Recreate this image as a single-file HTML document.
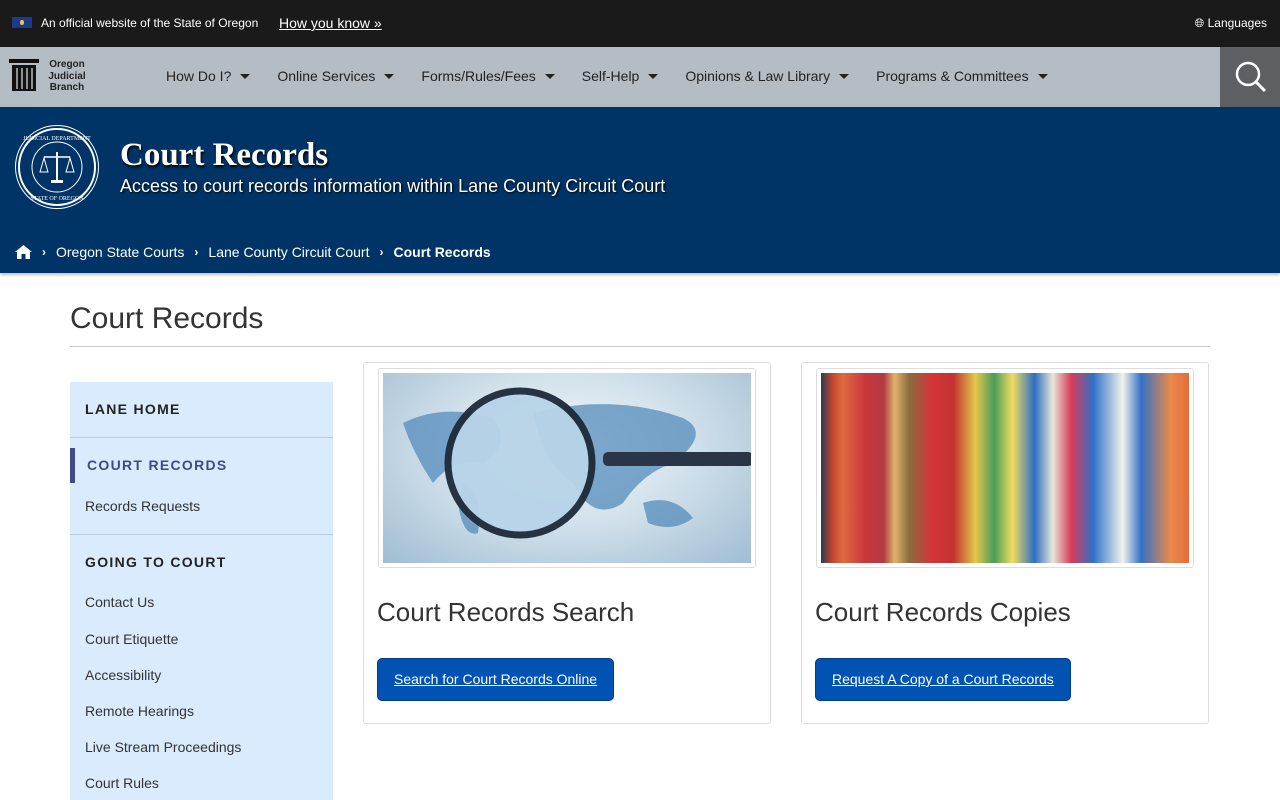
<!DOCTYPE html>
<html><head><meta charset="utf-8"><style>
*{box-sizing:border-box;margin:0;padding:0}
html,body{width:1280px;height:800px;overflow:hidden}
body{font-family:"Liberation Sans",Arial,sans-serif;background:#fff;color:#333;position:relative}
.top{height:47px;background:#1a1a1a;color:#fff;font-size:12px;position:relative}
.top .flag{position:absolute;left:12px;top:17px;width:20px;height:11px;background:#1d3a8a}
.top .flag:after{content:"";position:absolute;left:8px;top:3px;width:4px;height:5px;background:#e6c24a;border-radius:2px}
.top .t1{position:absolute;left:41px;top:16px}
.top .t2{position:absolute;left:279px;top:15px;font-size:14px;text-decoration:underline}
.top .lang{position:absolute;right:13px;top:16px}
.nav{height:60px;background:#b3bdc3;position:relative}
.logo{position:absolute;left:9px;top:12px}
.logo .txt{position:absolute;left:36px;top:0;font-size:10px;font-weight:bold;line-height:11.5px;text-align:center;color:#222;width:44px}
.nav ul{list-style:none;position:absolute;left:166px;top:21px;display:flex;font-size:14px;color:#222}
.nav li{margin-right:27px;white-space:nowrap}
.nav li:after{content:"";display:inline-block;margin-left:9px;border-left:5px solid transparent;border-right:5px solid transparent;border-top:5px solid #222;vertical-align:2px}
.srch{position:absolute;right:0;top:0;width:60px;height:60px;background:#5d6063}
.hero{height:166px;background:#003366;position:relative;color:#fff;box-shadow:0 2px 3px rgba(0,0,0,.25)}
.seal{position:absolute;left:18px;top:21px;width:78px;height:78px;border-radius:50%;border:2px solid #fff;box-shadow:0 0 0 2px #003366,0 0 0 3px #fff}
.hero h1{position:absolute;left:120px;top:30px;font-family:"Liberation Serif",serif;font-size:33px;font-weight:bold;text-shadow:1px 2px 2px #000}
.hero .sub{position:absolute;left:120px;top:69px;font-size:18px;text-shadow:1px 1px 2px #000}
.bc{position:absolute;left:15px;top:137px;font-size:14px;display:flex;align-items:center}
.bc .sep{margin:0 10px;font-size:12px;font-weight:bold}
h2.pt{position:absolute;left:70px;top:302px;font-size:30px;font-weight:normal;color:#333}
.hr{position:absolute;left:70px;top:346px;width:1140px;border-top:1px solid #ccc}
.side{position:absolute;left:70px;top:382px;width:263px;height:418px;background:#d9ebfd}
.side .h{font-size:14px;font-weight:bold;letter-spacing:1.3px;position:absolute;left:15px;color:#222}
.side .l{font-size:14px;position:absolute;left:15px;color:#333}
.side .line{position:absolute;left:0;width:263px;border-top:1px solid #b8cbe0}
.card{position:absolute;top:362px;width:408px;height:362px;border:1px solid #ddd;border-radius:3px}
.img{position:absolute;left:14px;top:5px;width:378px;height:200px;border:1px solid #ddd;padding:4px;border-radius:3px}
.img div{width:100%;height:100%}
.card h3{position:absolute;left:13px;top:234px;font-size:26px;font-weight:normal;color:#333}
.btn{position:absolute;left:13px;top:295px;height:43px;background:#0053b3;border:1px solid #003d85;border-radius:5px;color:#fff;font-size:14px;text-decoration:underline;padding:0 16px;line-height:41px}
</style></head><body>
<div class="top"><div class="flag"></div><span class="t1">An official website of the State of Oregon</span><span class="t2">How you know »</span><span class="lang">&#127760;&#xFE0E; Languages</span></div>
<div class="nav">
<div class="logo"><svg width="30" height="34" viewBox="0 0 30 34"><rect x="0" y="0" width="30" height="4" fill="#111"/><rect x="3" y="6" width="24" height="26" fill="#111"/><g stroke="#b3bdc3" stroke-width="1.5"><line x1="8" y1="9" x2="8" y2="30"/><line x1="13" y1="9" x2="13" y2="30"/><line x1="18" y1="9" x2="18" y2="30"/><line x1="23" y1="9" x2="23" y2="30"/></g></svg><div class="txt">Oregon<br>Judicial<br>Branch</div></div>
<ul><li>How Do I?</li><li>Online Services</li><li>Forms/Rules/Fees</li><li>Self-Help</li><li>Opinions &amp; Law Library</li><li>Programs &amp; Committees</li></ul>
<div class="srch"><svg width="60" height="60"><circle cx="28" cy="27" r="11" fill="none" stroke="#fff" stroke-width="2.5"/><line x1="36" y1="35" x2="45" y2="44" stroke="#fff" stroke-width="3"/></svg></div>
</div>
<div class="hero">
<div class="seal"><svg width="74" height="74" viewBox="0 0 74 74"><circle cx="37" cy="37" r="25" fill="none" stroke="#fff" stroke-width="1"/><line x1="37" y1="22" x2="37" y2="50" stroke="#fff" stroke-width="2"/><line x1="24" y1="27" x2="50" y2="27" stroke="#fff" stroke-width="1.5"/><path d="M20 42 L24 28 L28 42 Z M46 42 L50 28 L54 42 Z" fill="none" stroke="#fff"/><rect x="31" y="50" width="12" height="3" fill="#fff"/><text x="37" y="10" font-size="6" fill="#fff" text-anchor="middle" font-family="Liberation Serif">JUDICIAL DEPARTMENT</text><text x="37" y="70" font-size="6" fill="#fff" text-anchor="middle" font-family="Liberation Serif">STATE OF OREGON</text></svg></div>
<h1>Court Records</h1>
<div class="sub">Access to court records information within Lane County Circuit Court</div>
<div class="bc"><svg width="17" height="14" viewBox="0 0 17 14"><path d="M8.5 0 L17 7 L15 7 L15 14 L10.5 14 L10.5 9 L6.5 9 L6.5 14 L2 14 L2 7 L0 7 Z" fill="#fff"/></svg><span class="sep">›</span>Oregon State Courts<span class="sep">›</span>Lane County Circuit Court<span class="sep">›</span><b>Court Records</b></div>
</div>
<h2 class="pt">Court Records</h2><div class="hr"></div>
<div class="side">
<div class="h" style="top:19px">LANE HOME</div>
<div class="line" style="top:55px"></div>
<div style="position:absolute;left:0;top:66px;width:5px;height:35px;background:#3d4a8c"></div>
<div class="h" style="top:75px;left:17px;color:#3d4a8c">COURT RECORDS</div>
<div class="l" style="top:116px">Records Requests</div>
<div class="line" style="top:152px"></div>
<div class="h" style="top:172px">GOING TO COURT</div>
<div class="l" style="top:212px">Contact Us</div>
<div class="l" style="top:249px">Court Etiquette</div>
<div class="l" style="top:285px">Accessibility</div>
<div class="l" style="top:321px">Remote Hearings</div>
<div class="l" style="top:357px">Live Stream Proceedings</div>
<div class="l" style="top:393px">Court Rules</div>
</div>
<div class="card" style="left:363px">
<div class="img"><div style="position:relative;background:radial-gradient(ellipse at 50% 40%,#f4f8fb 0%,#cfdfea 50%,#9fbdd2 100%)">
<svg width="368" height="190" style="position:absolute;left:0;top:0"><path d="M20 50 Q60 30 110 45 Q130 70 100 90 Q70 85 50 110 Q30 80 20 50Z M150 40 Q230 20 300 45 Q330 60 290 90 Q260 100 240 130 Q210 150 190 110 Q160 90 150 40Z M260 130 Q290 120 310 145 Q290 160 265 150Z M80 110 Q100 120 95 160 Q80 165 75 130Z" fill="#4d86b8" opacity=".7"/><circle cx="137" cy="90" r="72" fill="#b8d4e8" stroke="#1d2a3a" stroke-width="7" opacity=".95"/><rect x="220" y="79" width="150" height="14" rx="5" fill="#2a3545"/></svg></div></div>
<h3>Court Records Search</h3>
<a class="btn">Search for Court Records Online</a>
</div>
<div class="card" style="left:801px">
<div class="img"><div style="background:linear-gradient(90deg,#2a3a55 0%,#c2452e 3%,#e16a40 6%,#c9373c 12%,#b23a42 17%,#dfb36c 20%,#8b6b3e 24%,#d4343a 30%,#c4322f 36%,#e4c84b 42%,#4a9c5a 47%,#f0dc60 52%,#2d6fc4 58%,#e8e6d8 63%,#d83b5a 68%,#2f72c8 74%,#f2f2ec 82%,#3471c6 87%,#e98a4a 95%,#e36c3b 100%)"></div></div>
<h3>Court Records Copies</h3>
<a class="btn">Request A Copy of a Court Records</a>
</div>
</body></html>
